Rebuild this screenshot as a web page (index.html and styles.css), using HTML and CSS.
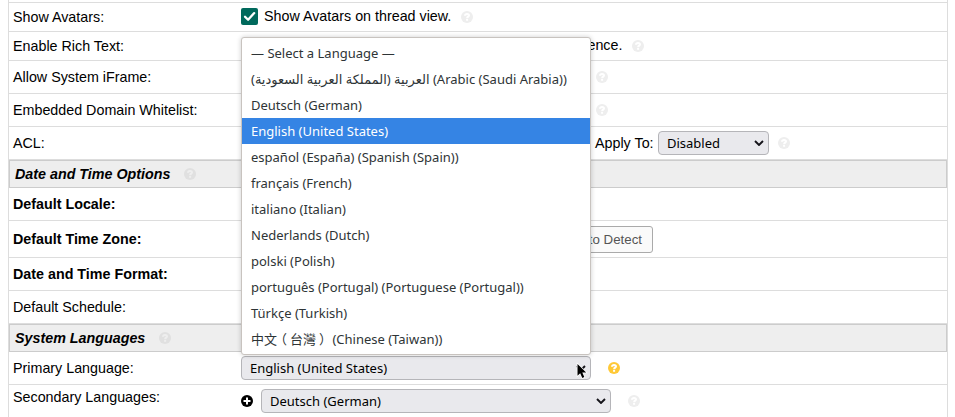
FILE: index.html
```html
<!DOCTYPE html>
<html lang="en">
<head>
<meta charset="utf-8">
<title>System Settings</title>
<link rel="stylesheet" href="styles.css">
</head>
<body>
<svg width="0" height="0" class="defs">
  <symbol id="help" viewBox="0 0 12 12"><circle cx="6" cy="6" r="6" fill="currentColor"/><path d="M4 4.8C4.1 3.4 5 2.9 6 2.9c1.2 0 2 .7 2 1.6 0 1.2-1.9 1.2-1.9 2.7" fill="none" stroke="var(--mark, #fff)" stroke-width="2"/><rect x="5.1" y="8" width="2" height="1.8" fill="var(--mark, #fff)"/></symbol>
  <symbol id="chevron" viewBox="0 0 10 6"><path d="M1 1l4 4 4-4" fill="none" stroke="#15141a" stroke-width="1.9"/></symbol>
  <symbol id="check" viewBox="0 0 17 17"><path d="M4 8.7l3.1 3.1 6.1-6.7" fill="none" stroke="#fff" stroke-width="2.3" stroke-linecap="round" stroke-linejoin="round"/></symbol>
</svg>
<div class="settings">
  <div class="row row-cut"></div>
  <div class="row short">
    <div class="label">Show Avatars:</div>
    <div class="field"><span class="checkbox"><svg><use href="#check"/></svg></span><span class="check-text">Show Avatars on thread view.</span><svg class="help help-text"><use href="#help"/></svg></div>
  </div>
  <div class="row short">
    <div class="label">Enable Rich Text:</div>
    <div class="field"><span class="checkbox compact"></span><span class="check-text">Enable html in thread entries and email correspondence.</span><svg class="help help-text"><use href="#help"/></svg></div>
  </div>
  <div class="row">
    <div class="label">Allow System iFrame:</div>
    <div class="field"><span class="input"></span><svg class="help"><use href="#help"/></svg></div>
  </div>
  <div class="row">
    <div class="label">Embedded Domain Whitelist:</div>
    <div class="field"><span class="input"></span><svg class="help"><use href="#help"/></svg></div>
  </div>
  <div class="row">
    <div class="label">ACL:</div>
    <div class="field"><span class="input"></span><span class="apply">Apply To:</span><span class="select small">Disabled<svg><use href="#chevron"/></svg></span><svg class="help help-acl"><use href="#help"/></svg></div>
  </div>
  <div class="section">Date and Time Options<svg class="help"><use href="#help"/></svg></div>
  <div class="row">
    <div class="label strong">Default Locale:</div>
  </div>
  <div class="row tall">
    <div class="label strong">Default Time Zone:</div>
    <div class="field"><span class="zone"></span><span class="button">Auto Detect</span></div>
  </div>
  <div class="row">
    <div class="label strong">Date and Time Format:</div>
  </div>
  <div class="row">
    <div class="label">Default Schedule:</div>
  </div>
  <div class="section">System Languages<svg class="help"><use href="#help"/></svg></div>
  <div class="row">
    <div class="label">Primary Language:</div>
    <div class="field">
      <span class="select">English (United States)<svg><use href="#chevron"/></svg></span><svg class="help help-select active"><use href="#help"/></svg>
      <div class="menu">
        <div class="option">— Select a Language —</div>
        <div class="option"><bdi dir="rtl">العربية (المملكة العربية السعودية)</bdi> (Arabic (Saudi Arabia))</div>
        <div class="option">Deutsch (German)</div>
        <div class="option selected">English (United States)</div>
        <div class="option">español (España) (Spanish (Spain))</div>
        <div class="option">français (French)</div>
        <div class="option">italiano (Italian)</div>
        <div class="option">Nederlands (Dutch)</div>
        <div class="option">polski (Polish)</div>
        <div class="option">português (Portugal) (Portuguese (Portugal))</div>
        <div class="option">Türkçe (Turkish)</div>
        <div class="option" lang="zh-TW">中文<span class="paren open">（</span>台灣<span class="paren close">）</span> (Chinese (Taiwan))</div>
      </div>
      <svg class="cursor" viewBox="0 0 12 18"><path d="M1.5 2v11.8l2.7-2.5 2.1 4.6 2-.9-2-4.4h3.9z"/></svg>
    </div>
  </div>
  <div class="row last">
    <div class="label">Secondary Languages:</div>
    <div class="field"><svg class="plus" viewBox="0 0 12 12"><circle cx="6" cy="6" r="6"/><path d="M6 2.5v7M2.5 6h7" stroke="#fff" stroke-width="2"/></svg><span class="select">Deutsch (German)<svg><use href="#chevron"/></svg></span><svg class="help help-select"><use href="#help"/></svg></div>
  </div>
</div>
</body>
</html>
```
FILE: styles.css
```css
* { box-sizing: border-box; }
body {
  margin: 0;
  height: 417px;
  overflow: hidden;
  background: #fff;
  color: #000;
  font: 14.3px/18px "Liberation Sans", Arial, sans-serif;
}
svg { display: block; flex: none; }
.defs { position: absolute; }
.settings {
  width: 940px;
  margin-left: 8px;
  border: solid #ddd;
  border-width: 0 1px;
}
.row {
  display: grid;
  grid-template-columns: 228px 1fr;
  align-items: center;
  height: 33px;
  padding-left: 4px;
  border-bottom: 1px solid #ddd;
}
.row-cut { height: 3px; }
.short { height: 29px; }
.tall { height: 37px; }
.last { height: 32px; border-bottom: 0; }
.last .label { padding-bottom: 8px; }
.label, .check-text, .apply { white-space: nowrap; }
.strong { font-weight: bold; }
.field { position: relative; display: flex; align-items: center; }
.short .field { height: 18px; margin-bottom: 1px; }
.check-text { padding-bottom: 1px; }
.section {
  display: flex;
  align-items: center;
  height: 28px;
  padding-left: 5px;
  border: 1px solid #ccc;
  background: #eee;
  font-weight: bold;
  font-style: italic;
}
.help { width: 12px; height: 12px; margin-left: 5px; color: #eee; }
.section .help { margin-left: 13.5px; color: #e0e0e0; --mark: #eee; }
.help-text { margin-left: 10px; }
.help-acl { margin-left: 9px; }
.help-select { margin-left: 17px; }
.help.active { color: #ffc937; }
.checkbox { width: 17px; height: 17px; margin-right: 6px; border-radius: 2px; background: #00695c; }
.compact { height: 11px; }
.checkbox svg { width: 17px; height: 17px; }
.input { width: 350px; height: 22px; }
.apply { width: 67px; padding-left: 4px; }
.zone { width: 305px; }
.button {
  width: 107px;
  height: 27px;
  padding-right: 10px;
  border: 1px solid #aaa;
  border-radius: 3px;
  background: #fafafa;
  color: #555;
  font-size: 13.3px;
  line-height: 25px;
  text-align: right;
}
.select {
  display: flex;
  align-items: center;
  justify-content: space-between;
  width: 350px;
  height: 24px;
  padding: 0 4px 0 8px;
  border: 1px solid #b5b5b9;
  border-radius: 4px;
  background: #e9e9ed;
  font: 13px/22px "Noto Sans", sans-serif;
}
.select svg { width: 10px; height: 6px; }
.small { width: 111px; }
.plus { width: 12px; height: 12px; margin-right: 8px; }
.menu {
  position: absolute;
  left: 0;
  bottom: 25px;
  width: 350px;
  height: 318px;
  padding: 2px 0;
  border: 1px solid #c8c3bf;
  border-radius: 3px;
  background: #fff;
  box-shadow: 0 0 5px rgba(0, 0, 0, .2);
  color: #2e3436;
  font: 13px/26px "Noto Sans", "DejaVu Sans", "Noto Sans CJK TC", sans-serif;
}
.option { height: 26px; padding-left: 9px; white-space: nowrap; }
.selected { background: #3584e4; color: #fff; }
.paren { display: inline-block; width: 13px; }
.open { transform: translateX(-3px); }
.close { transform: translateX(3px); }
.cursor { position: absolute; left: 335px; top: 6px; width: 12px; height: 18px; stroke: #fff; stroke-width: 1.5px; paint-order: stroke; }
```
